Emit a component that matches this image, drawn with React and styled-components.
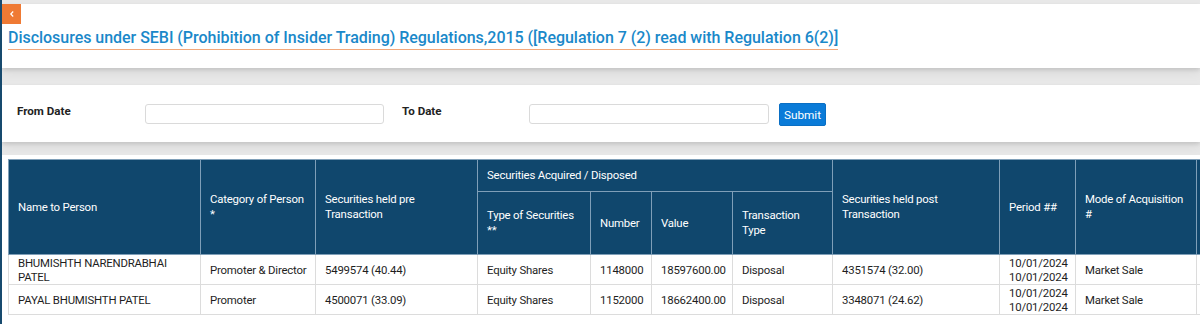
import styled, { createGlobalStyle } from 'styled-components';

const Global = createGlobalStyle`
  html, body { margin: 0; padding: 0; }
  body {
    background: #e8e8e8;
    font-family: Roboto, "Liberation Sans", Arial, sans-serif;
    color: #222;
    overflow: hidden;
  }
`;

const Page = styled.div`
  width: 1200px;
  height: 324px;
  overflow: hidden;
  border-left: 2px solid #174a6e;
  box-sizing: border-box;
  padding-top: 4px;
  display: flex;
  flex-direction: column;
`;

const Card = styled.section`
  background: #fff;
  box-shadow: 0 2px 4px rgba(0, 0, 0, 0.12), 0 6px 10px rgba(0, 0, 0, 0.05);
`;

const TitleCard = styled(Card)`
  height: 64px;
  box-sizing: border-box;
`;

const BackBtn = styled.button`
  display: flex;
  align-items: center;
  justify-content: center;
  box-sizing: border-box;
  width: 19px;
  height: 20px;
  padding: 0;
  border: 0;
  background: #ef7a34;
  color: #fff;
  cursor: pointer;
`;

const Title = styled.h1`
  display: inline-block;
  margin: 4px 0 0 6px;
  padding-bottom: 1px;
  font-size: 16px;
  font-weight: 500;
  letter-spacing: -0.03px;
  line-height: 20px;
  color: #1a88c9;
  border-bottom: 1px solid #f2a77a;
`;

const FormCard = styled(Card)`
  margin-top: 17px;
  height: 57px;
  display: grid;
  grid-template-columns: 128px 239px 18px 127px 240px 10px auto;
  align-items: center;
  padding-left: 15px;
`;

const Label = styled.label`
  font-size: 11.6px;
  font-weight: 700;
  color: #222;
  margin-top: -6px;
`;

const DateInput = styled.input`
  height: 20px;
  box-sizing: border-box;
  border: 1px solid #dadada;
  border-radius: 3px;
  background: #fff;
  outline: none;
`;

const SubmitBtn = styled.button`
  width: 47px;
  height: 23px;
  padding: 0;
  border: 1px solid #0a6fc4;
  border-radius: 2px;
  background: #0a7bd8;
  color: #fff;
  font-family: inherit;
  font-size: 11.8px;
  margin-top: 2px;
`;

const TableCard = styled(Card)`
  margin-top: 13px;
  flex: 1;
  padding: 4px 0 0 6px;
  box-shadow: none;
`;

const Table = styled.table`
  table-layout: fixed;
  width: 1300px;
  border-collapse: collapse;
  font-size: 11.4px;
  letter-spacing: -0.2px;
  border: 1px solid #dcdcdc;
`;

const Th = styled.th`
  background: #10476d;
  color: #fff;
  font-weight: 400;
  text-align: ${p => p.$center ? 'center' : 'left'};
  vertical-align: middle;
  padding: 0 8px 0 9px;
  line-height: 15px;
  border: 1px solid #7f9fb8;
  height: ${p => p.$h || 'auto'};
`;

const Td = styled.td`
  padding: 0 8px 0 9px;
  line-height: 14px;
  height: 29px;
  border: 1px solid #dcdcdc;
  text-align: ${p => p.$center ? 'center' : 'left'};
  color: #1e1e1e;
`;

const cols = [192, 115, 162, 113, 61, 81, 100, 167, 76, 121, 112];

const rows = [
  {
    name: <>BHUMISHTH NARENDRABHAI<br />PATEL</>,
    cat: 'Promoter & Director',
    pre: '5499574 (40.44)',
    type: 'Equity Shares',
    num: '1148000',
    val: '18597600.00',
    tx: 'Disposal',
    post: '4351574 (32.00)',
    mode: 'Market Sale',
  },
  {
    name: 'PAYAL BHUMISHTH PATEL',
    cat: 'Promoter',
    pre: '4500071 (33.09)',
    type: 'Equity Shares',
    num: '1152000',
    val: '18662400.00',
    tx: 'Disposal',
    post: '3348071 (24.62)',
    mode: 'Market Sale',
  },
];

export default function App() {
  return (
    <>
      <Global />
      <Page>
        <TitleCard>
          <BackBtn aria-label="Back">
            <svg width="8" height="8" viewBox="0 0 8 8" fill="none">
              <path d="M5.2 1.5 2.8 4l2.4 2.5" stroke="#fff" strokeWidth="1.2" />
            </svg>
          </BackBtn>
          <Title>
            Disclosures under SEBI (Prohibition of Insider Trading) Regulations,2015 ([Regulation 7 (2) read with Regulation 6(2)]
          </Title>
        </TitleCard>

        <FormCard>
          <Label>From Date</Label>
          <DateInput />
          <span />
          <Label>To Date</Label>
          <DateInput />
          <span />
          <SubmitBtn>Submit</SubmitBtn>
        </FormCard>

        <TableCard>
          <Table>
            <colgroup>
              {cols.map((w, i) => <col key={i} style={{ width: w }} />)}
            </colgroup>
            <thead>
              <tr>
                <Th rowSpan={2}>Name to Person</Th>
                <Th rowSpan={2}>Category of Person<br />*</Th>
                <Th rowSpan={2}>Securities held pre<br />Transaction</Th>
                <Th colSpan={4} $h="31px">Securities Acquired / Disposed</Th>
                <Th rowSpan={2}>Securities held post<br />Transaction</Th>
                <Th rowSpan={2}>Period ##</Th>
                <Th rowSpan={2}>Mode of Acquisition<br />#</Th>
                <Th rowSpan={2}></Th>
              </tr>
              <tr>
                <Th $h="62px">Type of Securities<br />**</Th>
                <Th>Number</Th>
                <Th>Value</Th>
                <Th>Transaction<br />Type</Th>
              </tr>
            </thead>
            <tbody>
              {rows.map((r, i) => (
                <tr key={i}>
                  <Td>{r.name}</Td>
                  <Td>{r.cat}</Td>
                  <Td>{r.pre}</Td>
                  <Td>{r.type}</Td>
                  <Td>{r.num}</Td>
                  <Td>{r.val}</Td>
                  <Td>{r.tx}</Td>
                  <Td>{r.post}</Td>
                  <Td $center>10/01/2024<br />10/01/2024</Td>
                  <Td>{r.mode}</Td>
                  <Td></Td>
                </tr>
              ))}
            </tbody>
          </Table>
        </TableCard>
      </Page>
    </>
  );
}
